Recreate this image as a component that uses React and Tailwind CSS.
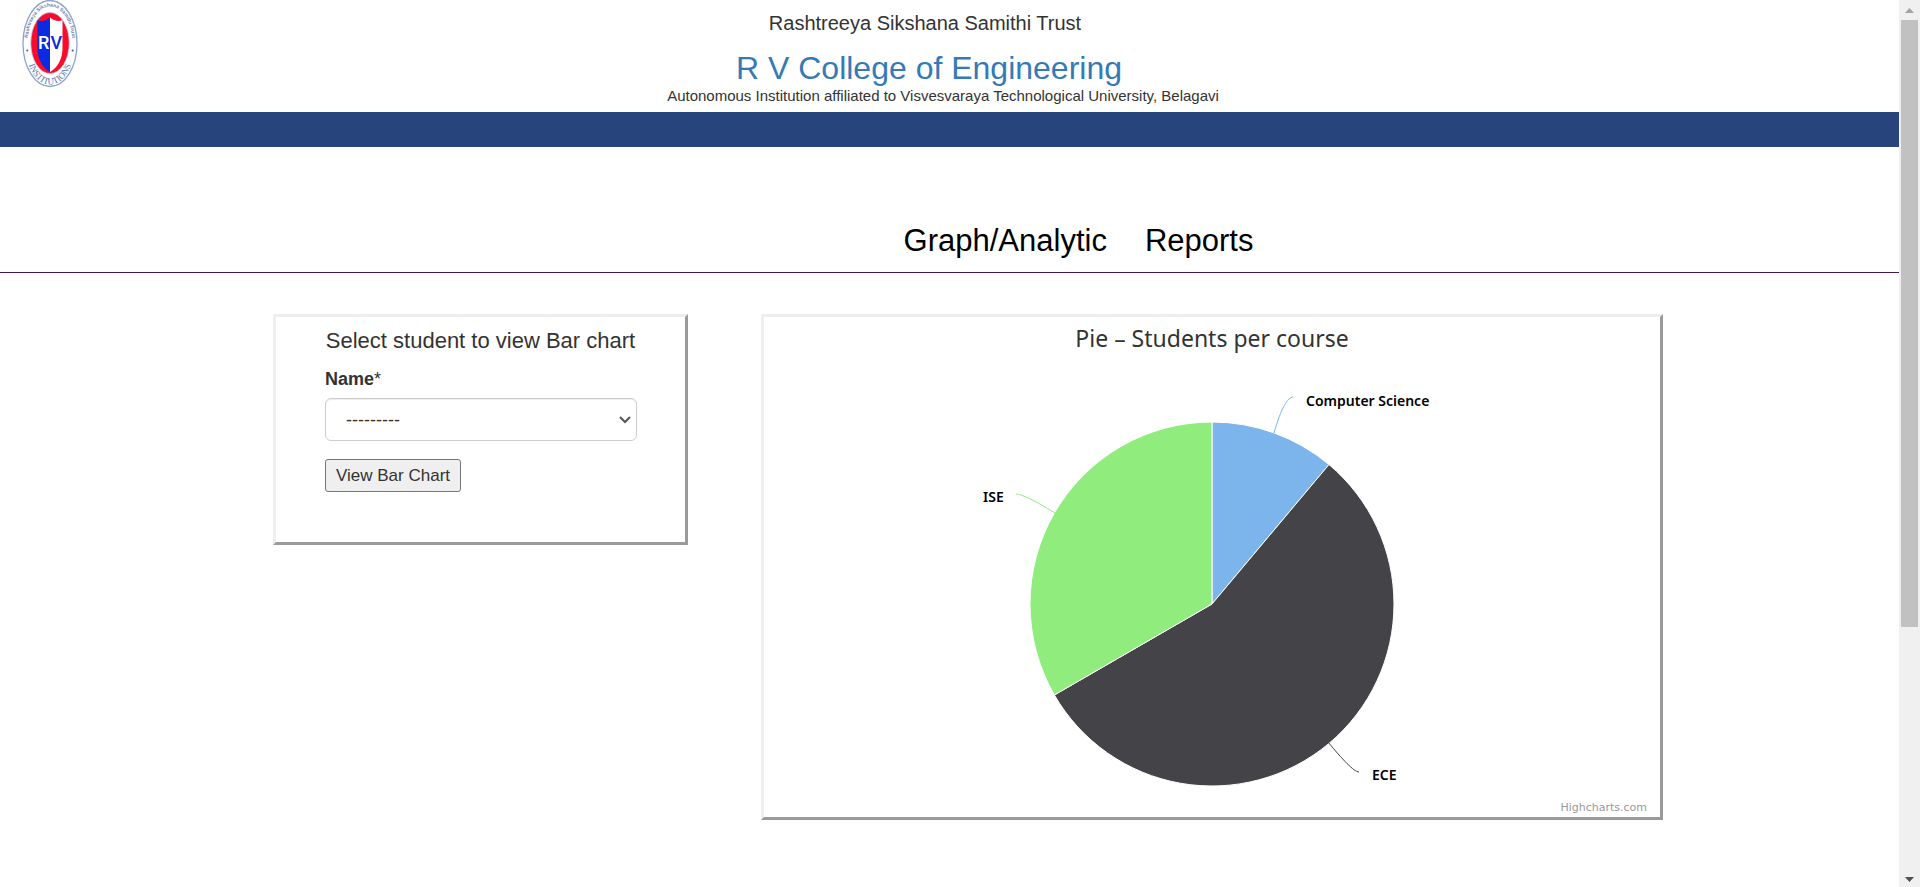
const slices = [
  { name: "Computer Science", from: 0, to: 40, color: "#7cb5ec", connector: "M529 80 C524 80 517 91 510 116", x: 542, y: 89 },
  { name: "ECE", from: 40, to: 240, color: "#434348", connector: "M595 455 C590 455 578 442 564 425", x: 608, y: 463 },
  { name: "ISE", from: 240, to: 360, color: "#90ed7d", connector: "M252 177 C257 177 270 183 291 196", x: 219, y: 185 },
];

const CX = 448;
const CY = 287;
const R = 182;

function arc(from, to) {
  const point = (deg) => {
    const a = (deg * Math.PI) / 180;
    return `${CX + R * Math.sin(a)} ${CY - R * Math.cos(a)}`;
  };
  return `M${CX} ${CY} L${point(from)} A${R} ${R} 0 ${to - from > 180 ? 1 : 0} 1 ${point(to)} Z`;
}

function Logo() {
  return (
    <svg viewBox="0 0 56 88" className="h-[88px] w-14" role="img" aria-label="RV Institutions">
      <defs>
        <path id="ring-top" d="M5.500 43.500 A22.500 37 0 0 1 50.500 43.500" />
        <path id="ring-bottom" d="M3 43.500 A25 41 0 0 0 53 43.500" />
      </defs>
      <ellipse cx="28" cy="43.500" rx="27" ry="43" fill="#fff" stroke="#8ba3cb" strokeWidth="1.300" />
      <ellipse cx="28" cy="43" rx="19.200" ry="30.500" fill="#fb0a2a" stroke="#b9c5df" strokeWidth="0.800" />
      <path d="M28 17.500 C24 21 19 22 15.500 20 V48 C15.500 60 21 68 28 72 Z" fill="#0b2be0" />
      <path d="M28 17.500 C32 21 37 22 40.500 20 V48 C40.500 60 35 68 28 72 Z" fill="#fff" />
      <g fontFamily="Roboto, sans-serif" fontWeight="500" fontSize="18">
        <text x="16" y="49" fill="#fff">R</text>
        <text x="28.500" y="49" fill="#0b2be0">V</text>
      </g>
      <text fontFamily="Liberation Sans, sans-serif" fontWeight="bold" fontSize="5" fill="#6d82b0" textAnchor="middle">
        <textPath href="#ring-top" startOffset="50%">Rashtreeya Sikshana Samithi Trust</textPath>
      </text>
      <text fontFamily="Liberation Serif, serif" fontSize="9" fill="#5a76b3" textAnchor="middle">
        <textPath href="#ring-bottom" startOffset="50%">INSTITUTIONS</textPath>
      </text>
      <circle cx="5.300" cy="50.500" r="1.100" fill="#3d5fc0" />
      <circle cx="50.700" cy="50.500" r="1.100" fill="#3d5fc0" />
    </svg>
  );
}

function PieChart() {
  return (
    <svg viewBox="0 0 896 500" className="block w-full" role="img" aria-label="Pie – Students per course" fontFamily="Noto Sans, sans-serif">
      <text x={CX} y="30" textAnchor="middle" fontSize="23" fill="#333">Pie – Students per course</text>
      {slices.map((s) => (
        <g key={s.name}>
          <path d={arc(s.from, s.to)} fill={s.color} stroke="#fff" strokeWidth="1" strokeLinejoin="round" />
          <path d={s.connector} fill="none" stroke={s.color} strokeWidth="1" />
          <text x={s.x} y={s.y} fontSize="14" fontWeight="600" fill="#000">{s.name}</text>
        </g>
      ))}
      <text x="883" y="494" textAnchor="end" fontFamily="DejaVu Sans, sans-serif" fontSize="11" fill="#999">Highcharts.com</text>
    </svg>
  );
}

function ScrollBar() {
  return (
    <div aria-hidden="true" className="sticky top-0 flex h-screen w-[21px] shrink-0 flex-col items-center bg-[#f0f0f0]">
      <svg viewBox="0 0 17 20" className="h-5 w-[17px]"><path d="M4 13 L8.500 8 L13 13 Z" fill="#a3a3a3" /></svg>
      <div className="h-[607px] w-[17px] bg-[#c1c1c1]" />
      <svg viewBox="0 0 17 20" className="mt-auto h-5 w-[17px]"><path d="M4 10 L8.500 15 L13 10 Z" fill="#505050" /></svg>
    </div>
  );
}

export default function App() {
  return (
    <div className="flex min-h-screen bg-white font-['Liberation_Sans',Arial,sans-serif] text-[#333]">
      <div className="min-w-0 flex-1">
        <header className="grid h-28 grid-cols-[80px_1fr_93px]">
          <div className="pl-[22px]"><Logo /></div>
          <div className="flex flex-col items-center">
            <p className="mt-2 mr-9 text-xl leading-[30px]">Rashtreeya Sikshana Samithi Trust</p>
            <h1 className="mt-3 mr-7 text-[32px] leading-9">
              <a href="#" className="text-[#337ab7]">R V College of Engineering</a>
            </h1>
            <p className="text-[15px] leading-5">Autonomous Institution affiliated to Visvesvaraya Technological University, Belagavi</p>
          </div>
        </header>
        <div className="h-[35px] bg-[#27447d]" />
        <nav className="flex h-[126px] items-end justify-center gap-[38px] border-b border-[#46185a] pb-[11px] pl-[258px] text-[31px] leading-10 text-black">
          <a href="#">Graph/Analytic</a>
          <a href="#">Reports</a>
        </nav>
        <main className="mt-[41px] grid grid-cols-[minmax(0,273fr)_minmax(0,415fr)_minmax(0,73fr)_minmax(0,902fr)_minmax(0,236fr)] items-start">
          <section className="col-start-2 h-[231px] border-3 border-t-[#eee] border-r-[#9a9a9a] border-b-[#9a9a9a] border-l-[#eee] px-12 pt-2">
            <h2 className="text-center text-[22px] leading-8">Select student to view Bar chart</h2>
            <form className="flex flex-col items-start pl-px" onSubmit={(e) => e.preventDefault()}>
              <label htmlFor="student" className="mt-2.5 text-lg leading-6 font-bold">Name<span className="font-normal">*</span></label>
              <div className="relative mt-[7px] w-full">
                <select id="student" className="block h-[43px] w-full appearance-none rounded-md border border-[#ccc] bg-white px-5 text-lg text-[#333] shadow-[inset_0_1px_1px_rgba(0,0,0,0.075)]">
                  <option>---------</option>
                </select>
                <svg viewBox="0 0 12 8" className="pointer-events-none absolute top-[18px] right-1.5 h-2 w-3">
                  <path d="M1 1 L6 6 L11 1" fill="none" stroke="#555" strokeWidth="2" />
                </svg>
              </div>
              <button type="submit" className="mt-[18px] h-[33px] rounded-[3px] border border-[#767676] bg-[#efefef] px-2.5 text-[17px] leading-6">View Bar Chart</button>
            </form>
          </section>
          <section className="col-start-4 border-3 border-t-[#eee] border-r-[#9a9a9a] border-b-[#9a9a9a] border-l-[#eee]">
            <PieChart />
          </section>
        </main>
      </div>
      <ScrollBar />
    </div>
  );
}
